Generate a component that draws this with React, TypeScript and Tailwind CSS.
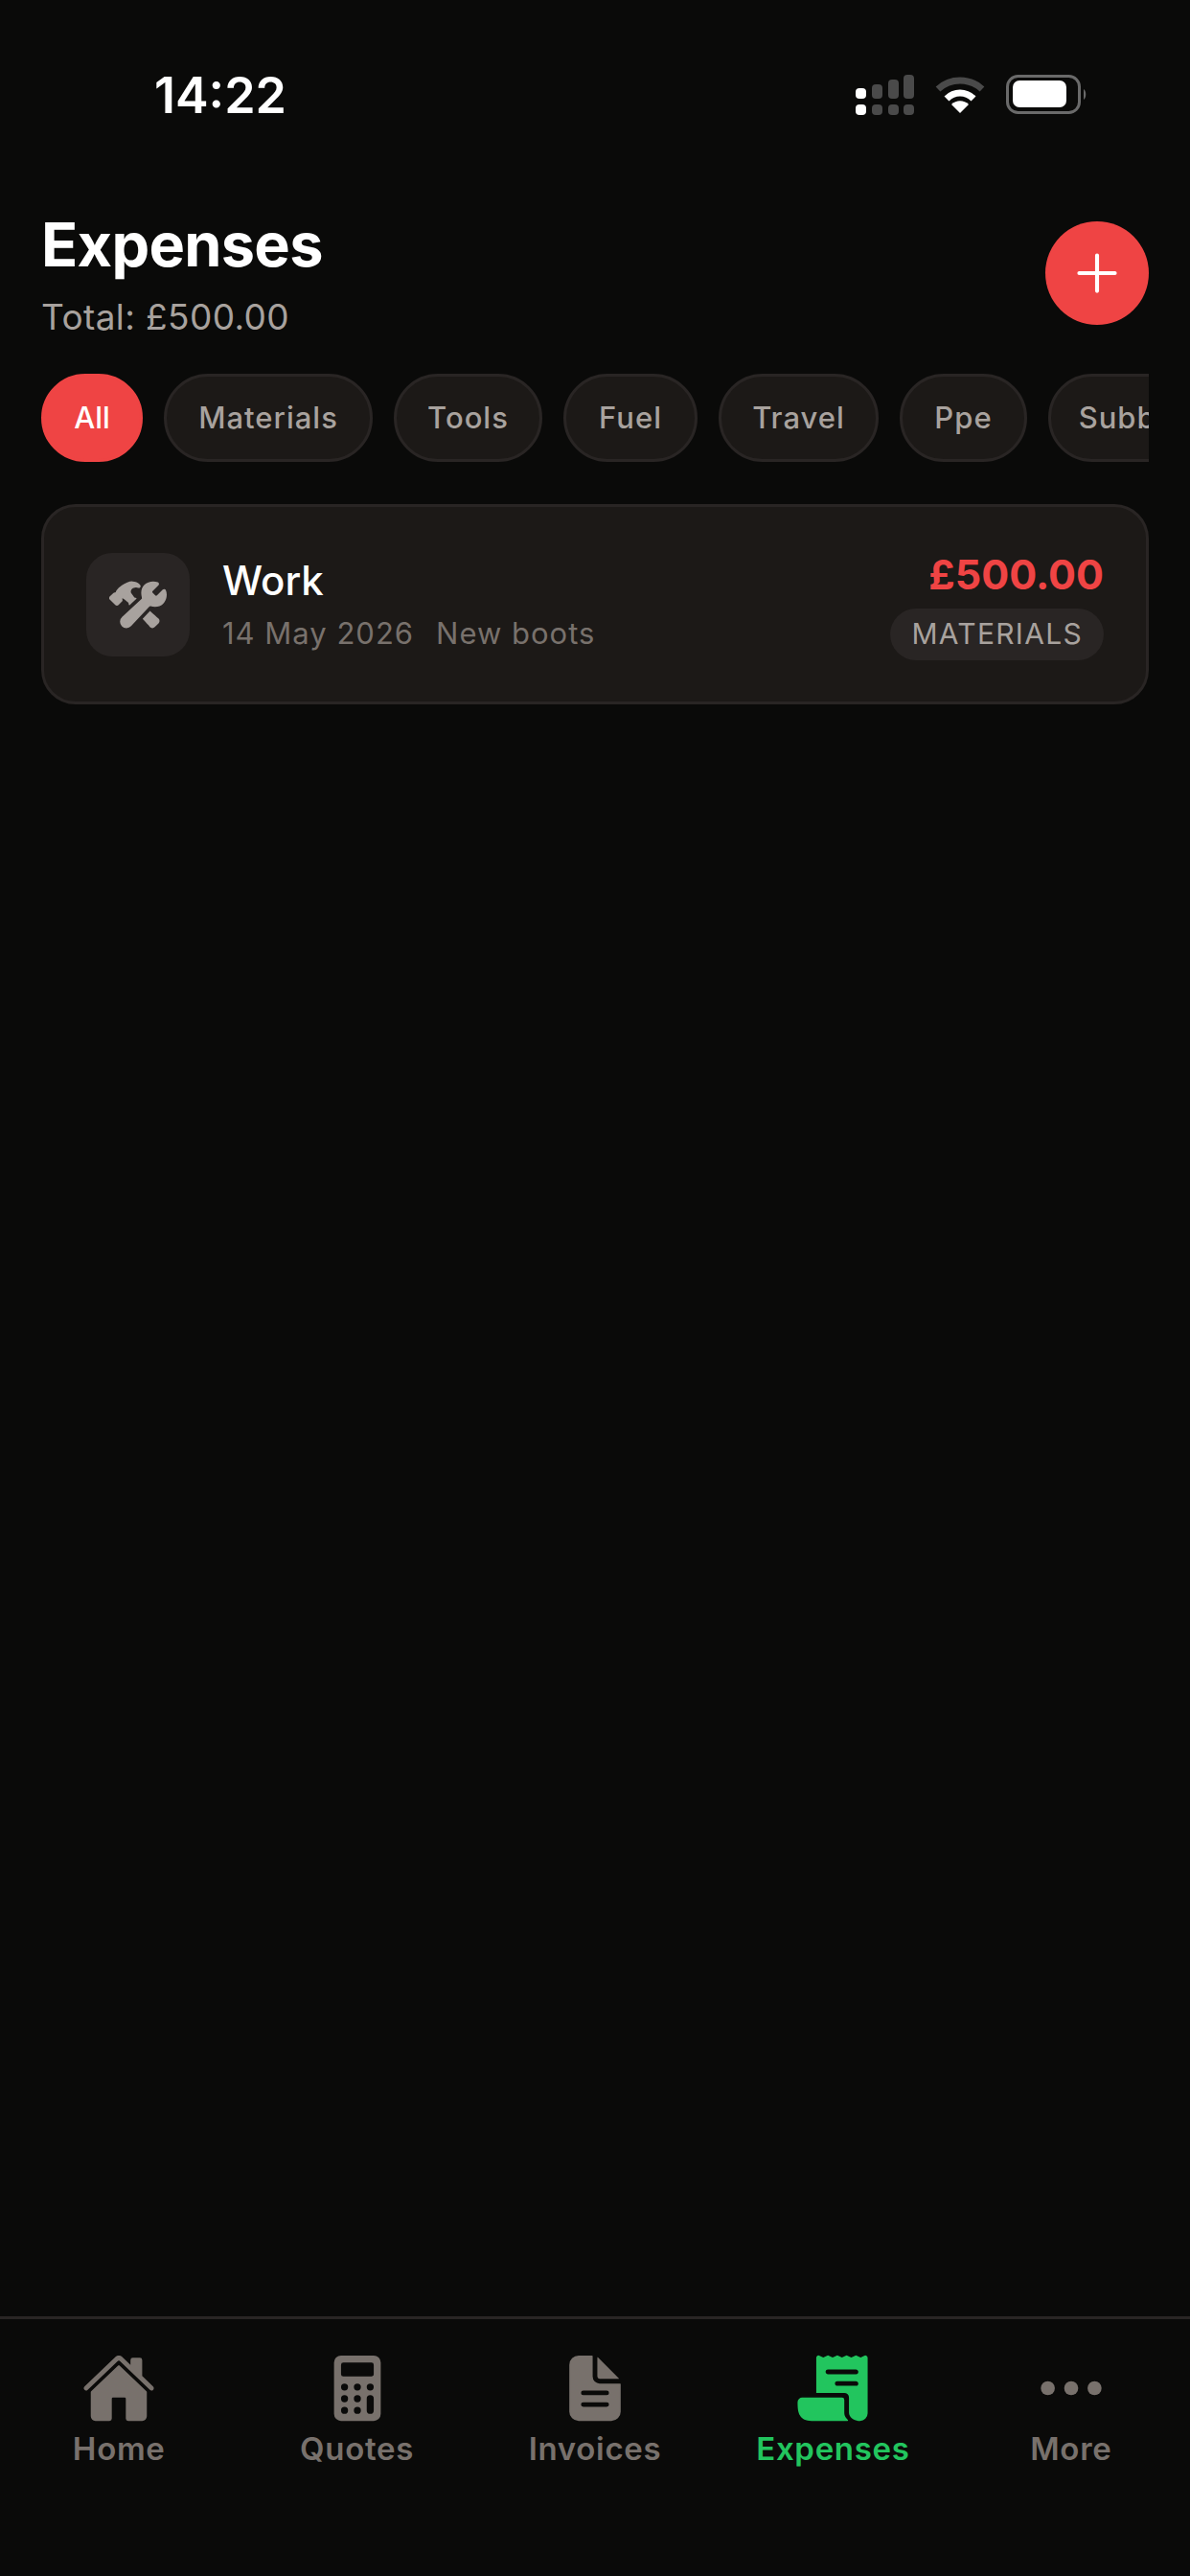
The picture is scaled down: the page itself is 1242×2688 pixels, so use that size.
import { FC } from 'react';
import { IoAdd, IoCalculator, IoConstruct, IoDocumentText, IoEllipsisHorizontal, IoHome, IoReceipt } from 'react-icons/io5';

const chips = [
  { label: 'All', w: 'w-[106px]' },
  { label: 'Materials', w: 'w-[218px]' },
  { label: 'Tools', w: 'w-[155px]' },
  { label: 'Fuel', w: 'w-[140px]' },
  { label: 'Travel', w: 'w-[167px]' },
  { label: 'Ppe', w: 'w-[133px]' },
  { label: 'Subbies', w: 'w-[190px]' },
];

const tabs = [
  { label: 'Home', Icon: IoHome },
  { label: 'Quotes', Icon: IoCalculator },
  { label: 'Invoices', Icon: IoDocumentText },
  { label: 'Expenses', Icon: IoReceipt, active: true },
  { label: 'More', Icon: IoEllipsisHorizontal },
];

const StatusIcons: FC = () => (
  <div className="flex items-center gap-[22px]">
    <svg width="61" height="42" viewBox="0 0 61 42">
      <rect x="0" y="14" width="11" height="11" rx="4" fill="#fff" />
      <rect x="17" y="10" width="11" height="15" rx="4" fill="#4a4a4a" />
      <rect x="34" y="5" width="11" height="20" rx="4" fill="#4a4a4a" />
      <rect x="50" y="0" width="11" height="25" rx="4" fill="#4a4a4a" />
      <rect x="0" y="31" width="11" height="11" rx="4" fill="#fff" />
      <rect x="17" y="31" width="11" height="11" rx="4" fill="#4a4a4a" />
      <rect x="34" y="31" width="11" height="11" rx="4" fill="#4a4a4a" />
      <rect x="50" y="31" width="11" height="11" rx="4" fill="#4a4a4a" />
    </svg>
    <svg width="52" height="38" viewBox="0 0 52 38">
      <path d="M3 13 C16 1 36 1 49 13" fill="none" stroke="#4a4a4a" strokeWidth="7" />
      <path d="M12 23 C20 15 32 15 40 23" fill="none" stroke="#fff" strokeWidth="7" />
      <path d="M26 38 L17 29 C22 24 30 24 35 29 Z" fill="#fff" />
    </svg>
    <svg width="85" height="42" viewBox="0 0 85 42">
      <rect x="1.5" y="1.5" width="75" height="38" rx="11" fill="none" stroke="#6a6a6a" strokeWidth="3" />
      <rect x="7" y="6" width="56" height="28" rx="7" fill="#fff" />
      <path d="M81 15 C84 17 84 24 81 26 Z" fill="#6a6a6a" />
    </svg>
  </div>
);

export default function App() {
  return (
    <div className="w-[1242px] h-[2688px] flex flex-col bg-[#0a0a09] font-['Inter',sans-serif]">
      <div className="h-[200px] shrink-0 flex items-start justify-between pt-[70px] pl-[161px] pr-[107px]">
        <span className="text-[52px] leading-[60px] font-semibold text-white">14:22</span>
        <div className="pt-[8px]"><StatusIcons /></div>
      </div>

      <div className="flex-1 px-[43px]">
        <div className="flex items-start justify-between h-[190px]">
          <div className="flex flex-col pt-[17px]">
            <span className="text-[63px] leading-[76px] font-bold text-white tracking-[-0.7px]">Expenses</span>
            <span className="text-[37px] leading-[50px] text-[#a8a29e] mt-[13px] tracking-[0.4px]">Total: £500.00</span>
          </div>
          <button className="w-[108px] h-[108px] rounded-full bg-[#ef4444] flex items-center justify-center mt-[31px]">
            <IoAdd className="text-white" size={66} />
          </button>
        </div>

        <div className="flex gap-[22px] overflow-hidden">
          {chips.map((c, i) => (
            <div
              key={c.label}
              className={`${c.w} h-[92px] shrink-0 rounded-[46px] flex items-center justify-center border-[3px] text-[31px] font-medium pt-[1px] ${
                i === 0 ? 'bg-[#ef4444] border-[#ef4444] text-white' : 'bg-[#1c1917] border-[#292524] text-[#a8a29e] tracking-[1px]'
              }`}
            >
              {c.label}
            </div>
          ))}
        </div>

        <div className="mt-[44px] h-[209px] rounded-[36px] border-[3px] border-[#292524] bg-[#1c1917] flex items-center pl-[44px] pr-[44px]">
          <div className="w-[108px] h-[108px] rounded-[27px] bg-[#292524] flex items-center justify-center">
            <IoConstruct className="text-[#a8a29e]" size={60} />
          </div>
          <div className="flex-1 ml-[34px] flex flex-col">
            <span className="text-[42px] leading-[52px] font-medium text-white">Work</span>
            <div className="flex gap-[23px] text-[31px] leading-[42px] text-[#78716c] mt-[8px] tracking-[1px]">
              <span>14 May 2026</span>
              <span>New boots</span>
            </div>
          </div>
          <div className="flex flex-col items-end">
            <span className="text-[43px] leading-[52px] font-bold text-[#ef4444]">£500.00</span>
            <span className="mt-[10px] h-[54px] px-[22px] rounded-[27px] bg-[#292524] flex items-center text-[30px] text-[#a8a29e] tracking-[1.3px]">MATERIALS</span>
          </div>
        </div>
      </div>

      <div className="h-[271px] shrink-0 border-t-[3px] border-[#292524] flex pt-[33px]">
        {tabs.map(({ label, Icon, active }) => (
          <div key={label} className="flex-1 flex flex-col items-center">
            <Icon className={active ? 'text-[#22c55e]' : 'text-[#78716c]'} size={78} />
            <span className={`text-[33px] leading-[42px] font-semibold mt-[3px] tracking-[0.7px] ${active ? 'text-[#22c55e]' : 'text-[#78716c]'}`}>{label}</span>
          </div>
        ))}
      </div>
    </div>
  );
}
